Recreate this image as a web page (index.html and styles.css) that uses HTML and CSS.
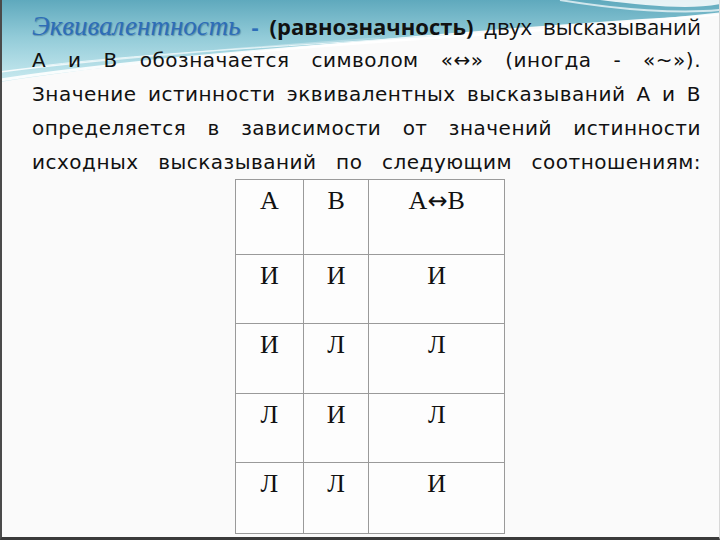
FILE: index.html
```
<!DOCTYPE html>
<html lang="ru">
<head>
<meta charset="utf-8">
<title>Эквивалентность</title>
<link rel="stylesheet" href="styles.css">
</head>
<body>
<div class="slide">
  <svg class="deco" width="720" height="110" viewBox="0 0 720 110" aria-hidden="true">
    <defs>
      <linearGradient id="band" x1="0" y1="0" x2="0" y2="1">
        <stop offset="0" stop-color="#5fa9bd"/>
        <stop offset="0.45" stop-color="#92cbd8"/>
        <stop offset="1" stop-color="#c9eaf0"/>
      </linearGradient>
      <linearGradient id="fade" x1="0" y1="0" x2="1" y2="0">
        <stop offset="0" stop-color="#ffffff" stop-opacity="0.9"/>
        <stop offset="1" stop-color="#ffffff" stop-opacity="0.2"/>
      </linearGradient>
    </defs>
    <path d="M0,0 H720 V14 C600,22 470,30 330,44 C200,56 90,68 0,82 Z" fill="url(#band)"/>
    <path d="M0,80 C120,62 260,50 400,40 C520,32 630,24 720,14" fill="none" stroke="#ffffff" stroke-width="3" opacity="0.9"/>
    <path d="M0,72 C110,58 240,48 380,38" fill="none" stroke="url(#fade)" stroke-width="1.5"/>
    <path d="M40,66 C160,52 300,46 460,34" fill="none" stroke="#e8f6f9" stroke-width="1"/>
    <path d="M600,0 C650,6 690,10 720,4 V0 Z" fill="#ffffff" opacity="0.85"/>
    <path d="M560,0 C620,10 680,14 720,10" fill="none" stroke="#ffffff" stroke-width="2" opacity="0.7"/>
  </svg>
  <div class="text">
    <p class="line first"><span class="term">Эквивалентность</span><span class="dash"> - </span><b>(равнозначность)</b> двух высказываний</p>
    <p class="line">А и В обозначается символом «↔» (иногда - «~»).</p>
    <p class="line">Значение истинности эквивалентных высказываний А и В</p>
    <p class="line">определяется в зависимости от значений истинности</p>
    <p class="line">исходных высказываний по следующим соотношениям:</p>
  </div>
  <table class="truth">
    <colgroup><col class="c1"><col class="c2"><col class="c3"></colgroup>
    <tr class="r0"><td>А</td><td>В</td><td>А<span class="arrow">↔</span>В</td></tr>
    <tr class="r1"><td>И</td><td>И</td><td>И</td></tr>
    <tr class="r2"><td>И</td><td>Л</td><td>Л</td></tr>
    <tr class="r3"><td>Л</td><td>И</td><td>Л</td></tr>
    <tr class="r4"><td>Л</td><td>Л</td><td>И</td></tr>
  </table>
</div>
</body>
</html>
```
FILE: styles.css
```
html, body {
  margin: 0;
  padding: 0;
  background: #fafafa;
}
.slide {
  position: relative;
  width: 720px;
  height: 540px;
  box-sizing: border-box;
  background: #fafafa;
  border-left: 2px solid #4a4a4a;
  border-bottom: 3px solid #3a3a3a;
  border-right: 1px solid #d8d8d8;
  overflow: hidden;
}
.deco {
  position: absolute;
  left: -2px;
  top: 0;
}
.text {
  position: relative;
  padding: 9px 18px 0 30px;
  font-family: "DejaVu Sans", sans-serif;
  font-size: 20px;
  letter-spacing: 0.5px;
  line-height: 34px;
  color: #111;
}
.line {
  margin: 0;
  text-align: justify;
  text-align-last: justify;
}
.line.first {
  font-family: "Open Sans", "Noto Sans", sans-serif;
  font-size: 22px;
  letter-spacing: 0;
  white-space: nowrap;
}
.term {
  font-family: "Liberation Serif", serif;
  font-style: italic;
  font-size: 27px;
  color: #2d6db8;
  text-shadow: 1px 1px 1px rgba(0, 40, 90, 0.35);
}
.dash {
  color: #2d6db8;
  font-weight: bold;
}
.truth {
  position: relative;
  margin-left: 233px;
  border-collapse: collapse;
  width: 270px;
  background: #fdfdfd;
  font-family: "Liberation Serif", serif;
  font-size: 26px;
  line-height: 30px;
  color: #111;
}
.truth td {
  border: 1px solid #9a9a9a;
  vertical-align: top;
  text-align: center;
  padding: 6px 0 0;
}
.arrow {
  font-family: "DejaVu Sans", sans-serif;
  font-size: 24px;
}
.c1 { width: 68px; }
.c2 { width: 66px; }
.c3 { width: 136px; }
.r0 td { height: 68px; }
.r1 td { height: 62px; }
.r2 td { height: 63px; }
.r3 td { height: 62px; }
.r4 td { height: 64px; }
```
